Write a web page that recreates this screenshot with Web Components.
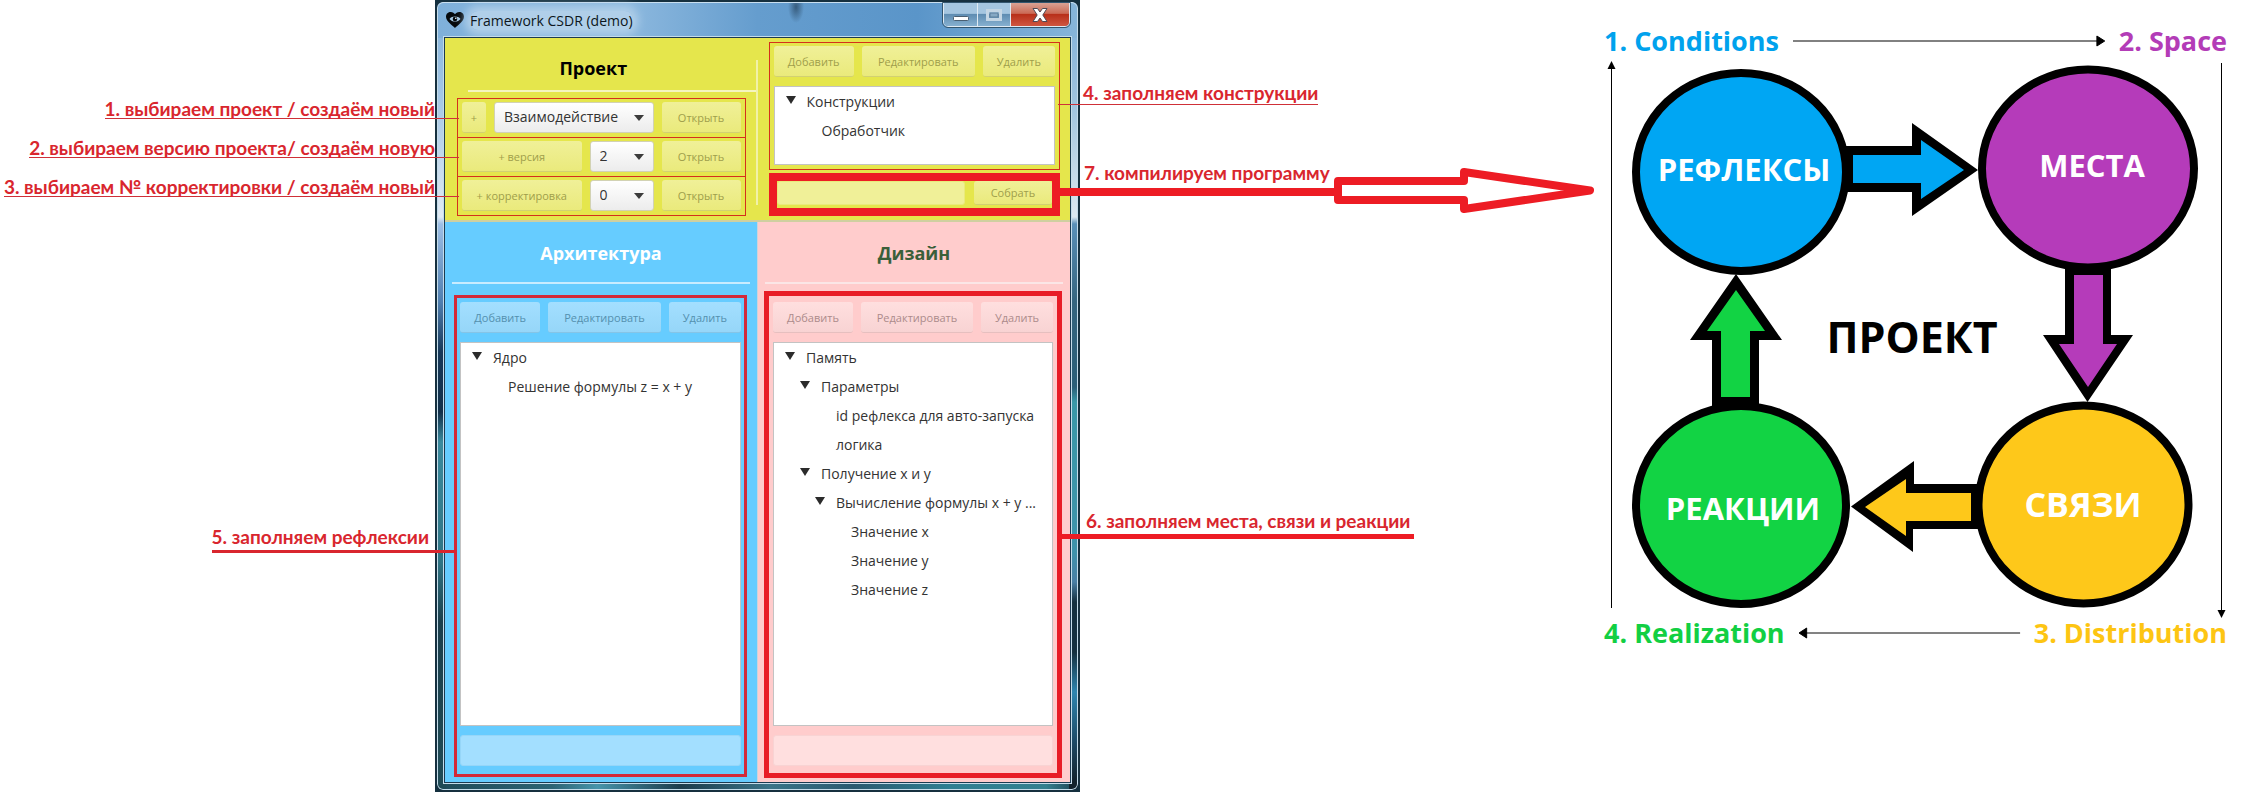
<!DOCTYPE html>
<html lang="ru">
<head>
<meta charset="utf-8">
<title>Framework CSDR (demo)</title>
<style>
  body { margin: 0; background: #fff; font-family: "Open Sans", "Noto Sans", sans-serif; }
</style>
</head>
<body>
<guide-page>
  <notes-column slot="left" side="left">
    <call-out side="left" weight="1">1. выбираем проект / создаём новый</call-out>
    <call-out side="left" weight="1">2. выбираем версию проекта/ создаём новую</call-out>
    <call-out side="left" weight="1">3. выбираем № корректировки / создаём новый</call-out>
    <call-out side="left" weight="3" class="n5">5. заполняем рефлексии</call-out>
  </notes-column>
  <app-window slot="window" caption="Framework CSDR (demo)">
    <project-panel slot="top"></project-panel>
    <section-panel slot="left" theme="blue" caption="Архитектура">
      <tree-item level="0" open>Ядро</tree-item>
      <tree-item level="1">Решение формулы z = x + y</tree-item>
    </section-panel>
    <section-panel slot="right" theme="pink" caption="Дизайн">
      <tree-item level="0" open>Память</tree-item>
      <tree-item level="1" open>Параметры</tree-item>
      <tree-item level="2">id рефлекса для авто-запуска</tree-item>
      <tree-item level="2">логика</tree-item>
      <tree-item level="1" open>Получение x и y</tree-item>
      <tree-item level="2" open>Вычисление формулы x + y ...</tree-item>
      <tree-item level="3">Значение x</tree-item>
      <tree-item level="3">Значение y</tree-item>
      <tree-item level="3">Значение z</tree-item>
    </section-panel>
  </app-window>
  <notes-column slot="right" side="right">
    <call-out side="right" weight="1">4. заполняем конструкции</call-out>
    <call-out side="right" weight="8" class="n7">7. компилируем программу</call-out>
    <call-out side="right" weight="5" class="n6">6. заполняем места, связи и реакции</call-out>
  </notes-column>
  <cycle-diagram slot="diagram"></cycle-diagram>
</guide-page>

<script>
const define = (name, html, setup) => {
  const template = document.createElement('template');
  template.innerHTML = html;
  customElements.define(name, class extends HTMLElement {
    constructor() {
      super();
      this.attachShadow({ mode: 'open' }).append(template.content.cloneNode(true));
    }
    connectedCallback() { if (setup) setup(this, this.shadowRoot); }
  });
};

define('guide-page', `
<style>
  :host { display: grid; grid-template-columns: 435fr 645fr 515fr 659fr; min-height: 100vh; overflow: hidden; }
  ::slotted(*) { min-width: 0; }
</style>
<slot name="left"></slot><slot name="window"></slot><slot name="right"></slot><slot name="diagram"></slot>`);

define('notes-column', `
<style>
  :host { display: flex; flex-direction: column; position: relative; z-index: 1; }
  :host([side="left"]) { align-items: flex-end; padding-top: 100px; gap: 20px; }
  :host([side="right"]) { align-items: flex-start; padding-top: 84px; }
  ::slotted(.n5) { margin-top: 311px; }
  ::slotted(.n7) { margin-top: 59px; }
  ::slotted(.n6) { margin-top: 316px; }
</style>
<slot></slot>`);

/* A red remark whose underline runs on into the window beside it. */
define('call-out', `
<style>
  :host { display: flex; align-items: flex-end; position: relative; font: bold 19px/18px "Lato", "Open Sans", sans-serif; color: #d9262e; white-space: nowrap; }
  p { margin: 0; border-bottom: 1px solid #cf3038; }
  i { position: absolute; bottom: 0; height: 1px; width: 24px; background: #cf3038; }
  :host([side="left"]) i { left: 100%; }
  :host([side="right"]) i { right: 100%; width: 22px; }
  :host([side="right"]) p { padding: 0 0 2px 3px; }
  :host([weight="3"]) p { border-bottom: 3px solid #d9262e; padding: 0 6px 4px 0; }
  :host([weight="3"]) i { height: 3px; width: 20px; background: #d9262e; }
  :host([weight="8"]) p { border-bottom: 8px solid #ed1c24; padding: 0 4px 6px; }
  :host([weight="8"]) i { height: 8px; background: #ed1c24; }
  :host([weight="5"]) p { border-bottom: 5px solid #ed1c24; padding: 0 4px 4px 6px; }
  :host([weight="5"]) i { height: 5px; background: #ed1c24; }
  svg { display: none; }
  :host([weight="8"]) svg { display: block; width: 260px; height: 46px; margin-bottom: -17px; }
</style>
<p><slot></slot></p><i></i>
<svg viewBox="0 0 260 46" aria-hidden="true"><path d="M4 14H130V5L256 23.500L130 42V33H4Z" fill="none" stroke="#ed1c24" stroke-width="8" stroke-linejoin="round"/></svg>`);

define('app-window', `
<style>
  :host { display: block; background: #14303f; }
  .frame { box-sizing: border-box; min-height: 100vh; display: flex; flex-direction: column;
    border: 2px solid #16303f; border-radius: 8px; padding: 0 8px 8px; box-shadow: inset 0 0 0 1px #c4dcea;
    background:
      linear-gradient(#7fb0da 0, #a6c8e6 100px, #e0eaf3 215px, #9dbfe6 222px, #4f7fb0 300px, #17395a 350px, #12304a 410px, #3a8a9e 440px, #2f7585 560px, #1b3f4d 620px, #1f4a55 760px) 0 0 / 9px 100% no-repeat,
      linear-gradient(#7fb0da 0, #9fc3de 100px, #dce8f0 215px, #5a90b8 222px, #35657f 300px, #2b5f78 385px, #3a98a8 400px, #3f93ab 550px, #4a7fa5 580px, #14303f 600px, #14303f 650px, #2f86b0 690px, #1d4a66 740px, #12222c 780px) 100% 0 / 9px 100% no-repeat,
      linear-gradient(90deg, #1f4a58 0, #2c6474 18%, #4795ab 25%, #1c3c4c 38%, #3a7488 52%, #2b5a70 65%, #2f7f92 80%, #35808f 95%, #1a4050 100%); }
  .bar { height: 36px; display: flex; align-items: flex-start; margin: 0 -7px; box-sizing: border-box; border-top: 1px solid #c9dff0; border-radius: 6px 6px 0 0;
    background:
      radial-gradient(ellipse 8px 16px at 358px 4px, #2c4c69cc, #2c4c6900) no-repeat,
      linear-gradient(90deg, #7fb0da 0, #8cb8de 190px, #659dce 50%, #5a95c9 75%, #86b5da 100%); }
  .bar svg.logo { width: 18px; height: 16px; margin: 9px 6px 0 8px; }
  h1 { margin: 6px 0 0; font: 14px/24px "Open Sans", sans-serif; color: #0c1620; flex: 1; white-space: nowrap; }
  h1 span { background: #b0cfe9; box-shadow: 0 0 8px 5px #b0cfe9; border-radius: 8px; }
  .ctl { display: flex; border: 1px solid #dfeaf3; outline: 1px solid #33566f; border-top: 0; border-radius: 0 0 5px 5px; overflow: hidden; height: 23px; margin-right: 7px; }
  .ctl button { border: 0; border-left: 1px solid #dfeaf3; padding: 0; height: 23px; width: 33px; display: grid; place-items: center; background: linear-gradient(#a5c6e0 0 45%, #5f8db2 50%, #86b0d0); }
  .ctl button:first-child { border: 0; }
  .ctl button:last-child { width: 59px; background: linear-gradient(#d9a294 0, #cb6a55 45%, #b8301a 50%, #cf5640); }
  .client { flex: 1; display: grid; grid-template-columns: 1fr 1fr; grid-template-rows: auto 1fr; gap: 0 1px; background: #cdd3da; box-shadow: 0 0 0 1px #1b3a50, 0 0 0 2px #c4dcea; }
  ::slotted([slot="top"]) { grid-column: 1 / 3; }
</style>
<div class="frame">
  <div class="bar">
    <svg class="logo" viewBox="0 0 18 16"><path d="M9 16C7 14 0 9.500 0 4.800C0 1.500 2.300 0 4.700 0C6.700 0 8.300 1 9 2.300C9.700 1 11.300 0 13.300 0C15.700 0 18 1.500 18 4.800C18 9.500 11 14 9 16Z" fill="#05090c"/><path d="M3.500 7C6 3.800 12 3.800 14.500 7C12 10.400 6 10.400 3.500 7Z" fill="#a9cbe6"/><circle cx="9" cy="7" r="2.300" fill="#05090c"/><circle cx="9.800" cy="6.300" r=".8" fill="#fff"/></svg>
    <h1><span></span></h1>
    <div class="ctl">
      <button aria-label="Свернуть"><svg width="18" height="14" viewBox="0 0 18 14"><rect x="1.500" y="8.500" width="15" height="4" rx="1" fill="#fff" stroke="#4a5f72"/></svg></button>
      <button aria-label="Развернуть"><svg width="18" height="14" viewBox="0 0 18 14"><path d="M2.500 2.500H15.500V11.500H2.500Z" fill="none" stroke="#c4d6e4" stroke-width="3"/><rect x="5" y="5" width="8" height="4" fill="#86a9c4" stroke="#5c7f9b"/></svg></button>
      <button aria-label="Закрыть"><svg width="18" height="14" viewBox="0 0 18 14"><path d="M2 .5H6.500L9 4L11.500 .5H16L11.800 7L16 13.500H11.500L9 10L6.500 13.500H2L6.200 7Z" fill="#fff" stroke="#4f4a55"/></svg></button>
    </div>
  </div>
  <div class="client"><slot name="top"></slot><slot name="left"></slot><slot name="right"></slot></div>
</div>`, (el, root) => { root.querySelector('h1 span').textContent = el.getAttribute('caption'); });

define('soft-button', `
<style>
  :host { display: block; min-width: 0; }
  button { display: block; box-sizing: border-box; width: 100%; height: var(--control-height, 31px); padding: var(--label-drop, 2px) 0 0; border: 0; border-bottom: 1px solid var(--edge); border-radius: 3px;
    background: linear-gradient(var(--face), var(--face-low)); color: var(--ink); font: 11px/20px "Open Sans", sans-serif; white-space: nowrap; }
</style>
<button type="button" disabled><slot></slot></button>`);

define('soft-field', `
<style>
  :host { display: block; min-width: 0; }
  input { display: block; box-sizing: border-box; width: 100%; height: var(--control-height, 31px); border: 1px solid var(--face-low); border-radius: 3px; background: var(--face); }
</style>
<input type="text" disabled>`, (el, root) => { root.querySelector('input').setAttribute('aria-label', el.getAttribute('label')); });

define('drop-down', `
<style>
  :host { display: block; position: relative; min-width: 0; }
  select { appearance: none; box-sizing: border-box; width: 100%; height: 31px; padding: 0 0 1px 9px; border: 1px solid #d2d2b4; border-radius: 3px; background: linear-gradient(#fff, #ececec); color: #333; font: 14px/24px "Open Sans", sans-serif; }
  svg { position: absolute; right: 10px; top: 13px; pointer-events: none; }
</style>
<select></select><svg width="10" height="6" viewBox="0 0 10 6"><path d="M0 0H10L5 6Z" fill="#3c3c3c"/></svg>`, (el, root) => {
  const select = root.querySelector('select');
  select.setAttribute('aria-label', el.getAttribute('label'));
  select.replaceChildren(new Option(el.getAttribute('value')));
});

define('tree-item', `
<style>
  :host { display: flex; align-items: center; height: 29px; color: #333; font: 14px/20px "Open Sans", sans-serif; white-space: nowrap; }
  svg { width: 10px; height: 8px; margin: 0 11px 4px 11px; visibility: hidden; flex: none; }
  :host([open]) svg { visibility: visible; }
  :host([level="1"]) { padding-left: 15px; }
  :host([level="2"]) { padding-left: 30px; }
  :host([level="3"]) { padding-left: 45px; }
</style>
<svg viewBox="0 0 10 8"><path d="M0 0H10L5 8Z" fill="#2b2b2b"/></svg><span role="treeitem"><slot></slot></span>`);

define('tree-editor', `
<style>
  :host { display: flex; flex-direction: column; gap: 9px; flex: 1; }
  .tools { display: grid; grid-template-columns: 80fr 112fr 72fr; gap: 8px; }
  .tree { flex: 1; box-sizing: border-box; min-height: 79px; background: #fff; border: 1px solid #c3c3c3; overflow: hidden; }
</style>
<div class="tools"><soft-button>Добавить</soft-button><soft-button>Редактировать</soft-button><soft-button>Удалить</soft-button></div>
<div class="tree" role="tree"><slot></slot></div>`);

define('section-panel', `
<style>
  :host { display: flex; flex-direction: column; box-sizing: border-box; }
  :host([theme="blue"]) { --face: #a3dfff; --face-low: #96d6f8; --edge: #85c4e6; --ink: #5490ae; background: #66ccff; }
  :host([theme="pink"]) { --face: #ffdfdf; --face-low: #f8d3d3; --edge: #e6bfbf; --ink: #ac8b8b; background: #ffcccc; }
  h2 { margin: 0 7px; height: 60px; font: bold 18px/62px "Open Sans", sans-serif; text-align: center; color: #fff; border-bottom: 2px solid #c8ecff; }
  :host([theme="pink"]) h2 { color: #3a5f3a; border-color: #fbe6e6; }
  .box { flex: 1; display: flex; flex-direction: column; gap: 9px; border: 3px solid #d2293a; padding: 4px 3px 8px; margin: 11px 10px 5px 9px; }
  :host([theme="pink"]) .box { border: 5px solid #e81c26; padding: 6px 4px 7px; margin: 7px 8px 4px 6px; }
</style>
<h2></h2>
<div class="box"><tree-editor><slot></slot></tree-editor><soft-field label="Поиск"></soft-field></div>`, (el, root) => {
  root.querySelector('h2').textContent = el.getAttribute('caption');
});

define('project-panel', `
<style>
  :host { --face: #f0f098; --face-low: #eaea7c; --edge: #d2d172; --ink: #9f9e4b; display: grid; grid-template-columns: 1fr 1fr; background: #e5e64c; box-sizing: border-box; height: 184px; border-bottom: 2px solid #cfcfa0; }
  .left { position: relative; }
  .left::after { content: ""; position: absolute; right: 0; top: 22px; bottom: 15px; width: 2px; background: #f1f1a8; }
  h2 { margin: 0 0 0 23px; padding: 8px 39px 0 0; font: bold 18px/44px "Open Sans", sans-serif; color: #000; text-align: center; border-bottom: 2px solid #f5f5c0; }
  .rows { border: 1px solid #d4301c; margin: 6px 12px 0; }
  .row { display: grid; gap: 8px; padding: 3px 4px 4px; }
  .row + .row { border-top: 1px solid #d4301c; }
  .r1 { grid-template-columns: 24px 1fr 79px; }
  .r2 { grid-template-columns: 1fr 64px 79px; }
  .list { border: 1px solid #d4301c; margin: 4px 10px 3px 11px; padding: 3px 4px 4px; display: flex; }
  .build { border: 8px solid #ed1c24; margin: 0 10px 0 11px; padding-bottom: 3px; display: grid; grid-template-columns: 1fr 78px; gap: 9px; --control-height: 24px; --label-drop: 0; }
</style>
<div class="left">
  <h2>Проект</h2>
  <div class="rows">
    <div class="row r1"><soft-button>+</soft-button><drop-down label="Проект" value="Взаимодействие"></drop-down><soft-button>Открыть</soft-button></div>
    <div class="row r2"><soft-button>+ версия</soft-button><drop-down label="Версия" value="2"></drop-down><soft-button>Открыть</soft-button></div>
    <div class="row r2"><soft-button>+ корректировка</soft-button><drop-down label="Корректировка" value="0"></drop-down><soft-button>Открыть</soft-button></div>
  </div>
</div>
<div>
  <div class="list"><tree-editor><tree-item level="0" open>Конструкции</tree-item><tree-item level="1">Обработчик</tree-item></tree-editor></div>
  <div class="build"><soft-field label="Программа"></soft-field><soft-button>Собрать</soft-button></div>
</div>`);

define('cycle-diagram', `
<style>
  :host { display: block; box-sizing: border-box; padding: 22px 27px 0 9px; font: bold 27px/38px "Open Sans", sans-serif; }
  .line { display: flex; align-items: center; gap: 14px; white-space: nowrap; }
  .line.low { line-height: 30px; }
  .line svg { flex: 1; height: 10px; min-width: 0; overflow: visible; }
  .mid { display: flex; justify-content: space-between; }
  .side { width: 13px; flex: none; height: 558px; }
  .map { flex: 1; min-width: 0; height: 558px; }
  .c { color: #00a2ed; } .s { color: #b33cb7; } .d { color: #fdc513; } .r { color: #12cf43; }
  text { font: bold 31px "Open Sans", sans-serif; fill: #fff; text-anchor: middle; }
  text.wide { font-size: 34px; }
  text.big { font-size: 43px; fill: #000; }
</style>
<div class="line"><span class="c">1. Conditions</span><svg viewBox="0 0 318 10" preserveAspectRatio="none"><path d="M0 5H312M310 0L318 5L310 10Z" stroke="#000" stroke-width="1"/></svg><span class="s">2. Space</span></div>
<div class="mid">
  <svg class="side" viewBox="0 0 13 558"><path d="M7.500 7V548" stroke="#000"/><path d="M7.500 1L11.500 9H3.500Z"/></svg>
  <svg class="map" viewBox="1617 60 597 558">
    <path d="M1845 146H1912V123L1978 170L1912 216V192H1845Z"/>
    <path d="M2065 262V335H2043L2087.500 402L2133 335H2111V262Z"/>
    <path d="M1736 274L1690 340H1712V412H1759V340H1782Z"/>
    <path d="M1851 506.500L1914 461V484H1980V529H1913V552Z"/>
    <g stroke="#000" stroke-width="8">
      <ellipse cx="1741" cy="172" rx="105" ry="99" fill="#00a6f3"/>
      <ellipse cx="2088" cy="168.500" rx="106" ry="99" fill="#b53bba"/>
      <ellipse cx="1741" cy="505" rx="105" ry="99" fill="#12d344"/>
      <ellipse cx="2083.500" cy="504.500" rx="105" ry="99" fill="#fec81a"/>
    </g>
    <path d="M1853 155H1921V140L1964 170L1921 199V183H1853Z" fill="#00a6f3"/>
    <path d="M2074 275V344H2059L2088 387L2117 344H2103V275Z" fill="#b53bba"/>
    <path d="M1736 290L1707 331H1721V397H1750V331H1765Z" fill="#12d344"/>
    <path d="M1865 507L1906 479V493H1971V521H1906V536Z" fill="#fec81a"/>
    <text x="1744" y="181">РЕФЛЕКСЫ</text>
    <text x="2092" y="177">МЕСТА</text>
    <text x="1743" y="520">РЕАКЦИИ</text>
    <text class="wide" x="2083" y="517">СВЯЗИ</text>
    <text class="big" x="1912" y="353">ПРОЕКТ</text>
  </svg>
  <svg class="side" viewBox="0 0 13 558"><path d="M7.500 3V552" stroke="#000"/><path d="M7.500 558L11.500 550H3.500Z"/></svg>
</div>
<div class="line low"><span class="r">4. Realization</span><svg viewBox="0 0 231 10" preserveAspectRatio="none"><path d="M231 5H6M8 0L0 5L8 10Z" stroke="#000" stroke-width="1"/></svg><span class="d">3. Distribution</span></div>`);
</script>
</body>
</html>
